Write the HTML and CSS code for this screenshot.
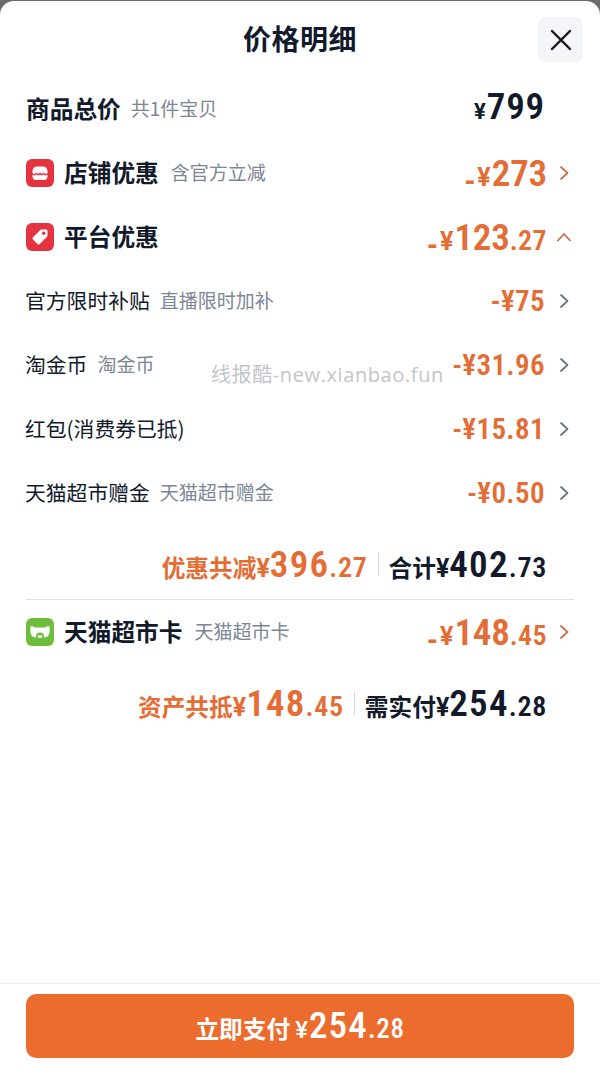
FILE: index.html
```html
<!DOCTYPE html>
<html lang="zh">
<head>
<meta charset="utf-8">
<title>价格明细</title>
<link rel="stylesheet" href="styles.css">
</head>
<body>
<div class="screen">
  <div class="sheet">
    <header class="head">
      <h1 class="title">价格明细</h1>
      <button class="close" aria-label="关闭">
        <svg width="22" height="22" viewBox="0 0 22 22"><path d="M2 2L20 20M20 2L2 20" stroke="#11151f" stroke-width="2.4" stroke-linecap="round" fill="none"/></svg>
      </button>
    </header>
    <main class="body">
      <div class="row">
        <div class="left"><span class="name">商品总价</span><span class="sub">共1件宝贝</span></div>
        <div class="amt big dark total-amt"><span class="cur">¥</span>799</div>
      </div>
      <div class="row">
        <div class="left">
          <svg class="ico" viewBox="0 0 28 28"><rect width="28" height="28" rx="6" fill="#e5343f"/><path d="M6.500 12C6.500 9 8.500 7.500 11 7.500H17C19.500 7.500 21.500 9 21.500 12V17.500C21.500 19.500 20 21 18 21H10C8 21 6.500 19.500 6.500 17.500Z" fill="#fff"/><path d="M6 14.500C7.500 16 9 16 10.500 14.500C12 16 13 16 14 14.500C15 16 16 16 17.500 14.500C19 16 20.500 16 22 14.500" fill="none" stroke="#e5343f" stroke-width="1.500"/></svg>
          <span class="name">店铺优惠</span><span class="sub wide">含官方立减</span>
        </div>
        <div class="right"><div class="amt big orange"><span class="minus">-</span><span class="cur">¥</span>273</div><svg class="chev" viewBox="0 0 10 16"><path d="M2 2L8.500 8L2 14" class="chev-o"/></svg></div>
      </div>
      <div class="row">
        <div class="left">
          <svg class="ico" viewBox="0 0 28 28"><rect width="28" height="28" rx="6" fill="#e5343f"/><path d="M15.500 6.500H20C21 6.500 21.500 7 21.500 8V12.500C21.500 13 21.300 13.400 21 13.700L13.500 21.200C13 21.700 12.200 21.700 11.700 21.200L6.800 16.300C6.300 15.800 6.300 15 6.800 14.500L14.300 7C14.600 6.700 15 6.500 15.500 6.500Z" fill="#fff"/><circle cx="17.700" cy="10.300" r="1.700" fill="#e5343f"/></svg>
          <span class="name">平台优惠</span>
        </div>
        <div class="right"><div class="amt big orange"><span class="minus">-</span><span class="cur">¥</span>123<span class="dec">.27</span></div><svg class="chev up" viewBox="0 0 16 10"><path d="M2 8.500L8 2L14 8.500" class="chev-o"/></svg></div>
      </div>
      <div class="row">
        <div class="left"><span class="name small">官方限时补贴</span><span class="sub">直播限时加补</span></div>
        <div class="right"><div class="amt mid orange">-¥75</div><svg class="chev" viewBox="0 0 10 16"><path d="M2 2L8.500 8L2 14" class="chev-g"/></svg></div>
      </div>
      <div class="row">
        <div class="left"><span class="name small">淘金币</span><span class="sub">淘金币</span></div>
        <div class="right"><div class="amt mid orange">-¥31.96</div><svg class="chev" viewBox="0 0 10 16"><path d="M2 2L8.500 8L2 14" class="chev-g"/></svg></div>
      </div>
      <div class="row">
        <div class="left"><span class="name small">红包(消费券已抵)</span></div>
        <div class="right"><div class="amt mid orange">-¥15.81</div><svg class="chev" viewBox="0 0 10 16"><path d="M2 2L8.500 8L2 14" class="chev-g"/></svg></div>
      </div>
      <div class="row">
        <div class="left"><span class="name small">天猫超市赠金</span><span class="sub">天猫超市赠金</span></div>
        <div class="right"><div class="amt mid orange">-¥0.50</div><svg class="chev" viewBox="0 0 10 16"><path d="M2 2L8.500 8L2 14" class="chev-g"/></svg></div>
      </div>
      <div class="summary first">
        <span class="sum-part orange"><span class="lab">优惠共减</span><span class="cur">¥</span><span class="num">396</span><span class="dec">.27</span></span>
        <span class="sep"></span>
        <span class="sum-part dark"><span class="lab">合计</span><span class="cur">¥</span><span class="num">402</span><span class="dec">.73</span></span>
      </div>
      <div class="rule"></div>
      <div class="row">
        <div class="left">
          <svg class="ico" viewBox="0 0 28 28"><rect width="28" height="28" rx="6" fill="#6cbf3c"/><path d="M4.500 8.500C6 7.800 7.500 8.300 8.500 9.500H19.500C20.500 8.300 22 7.800 23.500 8.500C23.800 11 23.800 14 23 16.500C22.300 18 20.500 19.500 18 19.500H10C7.500 19.500 5.700 18 5 16.500C4.200 14 4.200 11 4.500 8.500Z" fill="#fff"/><circle cx="14" cy="18.500" r="4" fill="#6cbf3c"/><ellipse cx="14" cy="18.500" rx="2.200" ry="1.500" fill="#fff"/></svg>
          <span class="name">天猫超市卡</span><span class="sub wide">天猫超市卡</span>
        </div>
        <div class="right"><div class="amt big orange"><span class="minus">-</span><span class="cur">¥</span>148<span class="dec">.45</span></div><svg class="chev" viewBox="0 0 10 16"><path d="M2 2L8.500 8L2 14" class="chev-o"/></svg></div>
      </div>
      <div class="summary second">
        <span class="sum-part orange"><span class="lab">资产共抵</span><span class="cur">¥</span><span class="num">148</span><span class="dec">.45</span></span>
        <span class="sep"></span>
        <span class="sum-part dark"><span class="lab">需实付</span><span class="cur">¥</span><span class="num">254</span><span class="dec">.28</span></span>
      </div>
    </main>
    <footer class="foot">
      <button class="pay"><span class="pay-lab">立即支付</span><span class="pay-cur">¥</span><span class="pay-num">254</span><span class="pay-dec">.28</span></button>
    </footer>
    <div class="mark">线报酷-new.xianbao.fun</div>
  </div>
</div>
</body>
</html>
```
FILE: styles.css
```css
* { box-sizing: border-box; }
html, body { margin: 0; padding: 0; }
body { width: 600px; height: 1083px; overflow: hidden; background: #6b6b6b; font-family: "Noto Sans CJK SC", "Noto Sans", sans-serif; color: #11192b; }
.screen { height: 1083px; padding-top: 1px; }
.sheet { position: relative; height: 1082px; background: #fff; border-radius: 14px 14px 0 0; display: flex; flex-direction: column; }
.head { position: relative; height: 76px; display: flex; justify-content: center; align-items: flex-start; padding-top: 15px; }
.title { margin: 0; font-size: 28px; line-height: 44px; font-weight: 700; letter-spacing: .5px; }
.close { position: absolute; right: 17px; top: 16px; width: 45px; height: 45px; border: 0; padding: 0; border-radius: 7px; background: #f4f5f8; display: flex; align-items: center; justify-content: center; }
.body { flex: 1; padding: 0 26px; }
.row { height: 64px; display: flex; align-items: center; justify-content: space-between; }
.left { display: flex; align-items: center; padding-bottom: 2px; }
.right { display: flex; align-items: center; }
.ico { width: 28px; height: 28px; margin: 2px 10px 0 0; flex: none; }
.name { font-size: 23.700px; font-weight: 700; line-height: 32px; color: #11192b; }
.name.small { font-size: 20.800px; font-weight: 400; margin-left: -1px; }
.sub { font-size: 19px; line-height: 32px; color: #7d8694; margin-left: 10px; }
.sub.wide { margin-left: 12px; }
.amt { font-family: Roboto, "Liberation Sans", sans-serif; font-weight: 600; white-space: nowrap; }
.big { font-size: 37px; letter-spacing: -.2px; line-height: 40px; font-stretch: 84%; }
.mid { font-size: 29px; letter-spacing: .4px; line-height: 36px; margin-right: 14px; font-stretch: 84%; }
.total-amt { margin-right: 29px; letter-spacing: .8px; }
.big .cur { font-size: 25px; font-weight: 700; margin-right: 1px; font-stretch: 100%; letter-spacing: 0; }
.big .minus { font-size: 34px; line-height: 0; vertical-align: -6px; margin-right: 2px; }
.big .dec { font-size: 28px; letter-spacing: .4px; }
.total-amt .cur { font-size: 22px; }
.big.orange { margin: 6px 12px 0 0; }
.orange { color: #e46d35; }
.dark { color: #11192b; }
.chev { width: 10px; height: 16px; flex: none; margin-right: 5px; }
.chev.up { width: 16px; height: 10px; margin-right: 2px; margin-left: -3px; }
.chev-o { fill: none; stroke: #c8714a; stroke-width: 1.800; stroke-linecap: round; stroke-linejoin: round; }
.chev-g { fill: none; stroke: #6d7480; stroke-width: 1.800; stroke-linecap: round; stroke-linejoin: round; }
.summary { display: flex; justify-content: flex-end; align-items: center; padding-right: 27px; }
.summary.first { height: 74px; padding-top: 4px; }
.summary.second { height: 72px; margin-top: 3px; }
.sum-part { display: flex; align-items: baseline; white-space: nowrap; font-family: Roboto, "Liberation Sans", sans-serif; font-weight: 600; font-stretch: 84%; }
.lab { font-family: "Noto Sans CJK SC", sans-serif; font-size: 23.700px; font-weight: 700; }
.cur { font-size: 25px; font-weight: 700; font-stretch: 100%; }
.num { font-size: 37px; letter-spacing: 1.200px; }
.sum-part .dec { font-size: 28px; letter-spacing: .7px; }
.sep { width: 1px; height: 24px; background: #d9dbe0; margin: 0 10px; }
.rule { height: 1px; background: #e1e2e5; }
.foot { height: 100px; border-top: 1px solid #f0f0f2; padding: 10px 26px 0; }
.pay { width: 548px; height: 64px; border: 0; border-radius: 10px; background: #ec6c2e; color: #fff; display: flex; align-items: baseline; justify-content: center; padding: 10px 0 0; font-family: Roboto, "Liberation Sans", sans-serif; font-stretch: 84%; }
.pay-lab { font-family: "Noto Sans CJK SC", sans-serif; font-size: 23.700px; font-weight: 700; }
.pay-cur { font-size: 24px; margin: 0 1px 0 5px; font-weight: 500; font-stretch: 100%; }
.pay-num { font-size: 37px; font-weight: 500; letter-spacing: 1.200px; }
.pay-dec { font-size: 27px; font-weight: 500; letter-spacing: .7px; }
.mark { position: absolute; left: 211px; top: 361px; font-family: "Open Sans", "Noto Sans CJK SC", sans-serif; font-size: 20px; line-height: 26px; letter-spacing: .6px; color: #c3c5c9; white-space: nowrap; }
```
